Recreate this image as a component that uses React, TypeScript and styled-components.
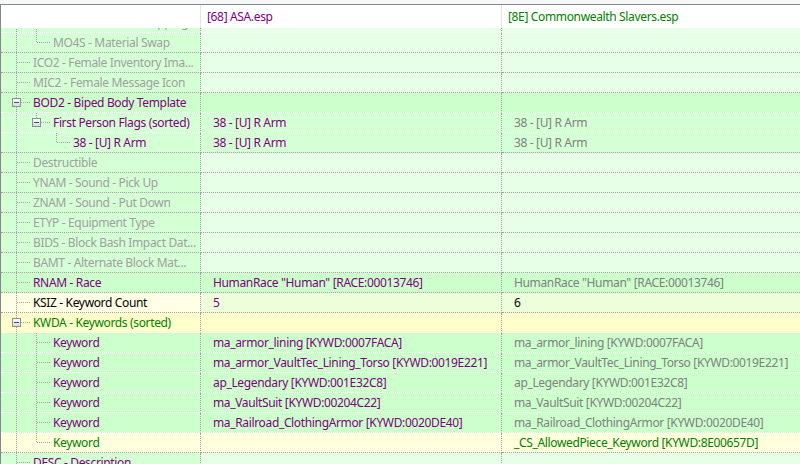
import styled, { createGlobalStyle } from "styled-components";

const GlobalStyle = createGlobalStyle`
  html, body {
    margin: 0;
    padding: 0;
    background: #f7f7f7;
  }
  body {
    font-family: "Noto Sans", "Segoe UI", sans-serif;
    font-size: 12px;
    letter-spacing: -0.35px;
  }
`;

const TREE_W = 200;
const PLUGIN_W = 301;

const Frame = styled.div`
  margin-top: 4px;
  height: 460px;
  box-sizing: border-box;
  border-top: 1px solid #828790;
  border-left: 1px solid #828790;
  background: #fff;
  display: flex;
  flex-direction: column;
  overflow: hidden;
`;

const Header = styled.div`
  display: flex;
  height: 23px;
  flex-shrink: 0;
  background: #fff;
`;

const HeaderCell = styled.div<{ $width?: number; $color?: string; $last?: boolean }>`
  width: ${(p) => (p.$width ? `${p.$width}px` : "auto")};
  flex: ${(p) => (p.$width ? "none" : "1")};
  box-sizing: border-box;
  border-right: ${(p) => (p.$last ? "none" : "1px solid #e5e5e5")};
  padding-left: 6px;
  display: flex;
  align-items: center;
  color: ${(p) => p.$color ?? "#000"};
  white-space: nowrap;
  overflow: hidden;
`;

const Body = styled.div`
  flex: 1;
  overflow: hidden;
`;

// list is scrolled a little, first row only shows its bottom edge
const Rows = styled.div`
  margin-top: -15px;
`;

const Row = styled.div`
  display: flex;
  height: 20px;
`;

const Cell = styled.div<{ $bg: string; $line: string; $width?: number; $last?: boolean }>`
  width: ${(p) => (p.$width ? `${p.$width}px` : "auto")};
  flex: ${(p) => (p.$width ? "none" : "1")};
  height: 20px;
  box-sizing: border-box;
  background: ${(p) => p.$bg};
  border-bottom: 1px dotted ${(p) => p.$line};
  border-right: ${(p) => (p.$last ? "none" : "1px dotted #a0a0a0")};
  display: flex;
  align-items: stretch;
  white-space: nowrap;
  overflow: hidden;
`;

const TreeCell = styled(Cell)`
  padding-left: 6px;
`;

const ValueCell = styled(Cell)`
  padding-left: 12px;
`;

const Label = styled.span<{ $color: string }>`
  margin-left: 6px;
  line-height: 19px;
  color: ${(p) => p.$color};
`;

const Value = styled.span<{ $color: string }>`
  line-height: 19px;
  color: ${(p) => p.$color};
`;

const Slot = styled.svg`
  flex: none;
  display: block;
  overflow: visible;
`;

type Guide = "none" | "pass" | "tee" | "elbow";

const GuideSlot = ({ kind, box }: { kind: Guide; box?: boolean }) => {
  const dash = "1 1";
  const stroke = "#a0a0a0";
  return (
    <Slot width={20} height={19} viewBox="0 0 20 19" shapeRendering="crispEdges">
      {(kind === "pass" || kind === "tee") && (
        <line x1={9.5} y1={0} x2={9.5} y2={19} stroke={stroke} strokeDasharray={dash} />
      )}
      {kind === "elbow" && (
        <line x1={9.5} y1={0} x2={9.5} y2={10} stroke={stroke} strokeDasharray={dash} />
      )}
      {(kind === "tee" || kind === "elbow") && (
        <line x1={box ? 14 : 10} y1={9.5} x2={23} y2={9.5} stroke={stroke} strokeDasharray={dash} />
      )}
      {box && (
        <g>
          <defs>
            <linearGradient id="bx" x1="0" y1="0" x2="0" y2="1">
              <stop offset="0" stopColor="#ffffff" />
              <stop offset="1" stopColor="#d8d8d8" />
            </linearGradient>
          </defs>
          <rect x={5.5} y={5.5} width={8} height={8} fill="url(#bx)" stroke="#8f8f8f" />
          <line x1={7} y1={9.5} x2={12} y2={9.5} stroke="#2f4f9f" />
        </g>
      )}
    </Slot>
  );
};

const GRAY = "#a0a0a0";
const VGRAY = "#808080";
const PURPLE = "#800080";
const GREEN = "#008000";
const BLACK = "#000000";

const D = "#d5ffd5";
const L = "#e6ffe6";
const S = "#ccffcc";
const Y = "#ffffcc";
const YL = "#ffffe6";
const YG = "#ecffda";
const YK = "#ffffdd";

const LINE_GRAY = "#a0a0a0";
const LINE_WHITE = "#ffffff";

interface RowData {
  label: string;
  guides: Guide[];
  box?: boolean;
  color: string;
  bg: [string, string, string];
  line: string;
  v2?: string;
  c2?: string;
  v3?: string;
  c3?: string;
}

const rows: RowData[] = [
  { label: "MO4C - Color Remapping Index", guides: ["pass", "tee"], color: GRAY, bg: [D, L, L], line: LINE_WHITE },
  { label: "MO4S - Material Swap", guides: ["pass", "elbow"], color: GRAY, bg: [D, L, L], line: LINE_GRAY },
  { label: "ICO2 - Female Inventory Ima...", guides: ["tee"], color: GRAY, bg: [D, L, L], line: LINE_GRAY },
  { label: "MIC2 - Female Message Icon", guides: ["tee"], color: GRAY, bg: [D, L, L], line: LINE_GRAY },
  { label: "BOD2 - Biped Body Template", guides: ["tee"], box: true, color: PURPLE, bg: [S, S, S], line: LINE_WHITE },
  {
    label: "First Person Flags (sorted)",
    guides: ["pass", "elbow"],
    box: true,
    color: PURPLE,
    bg: [D, D, D],
    line: LINE_WHITE,
    v2: "38 - [U] R Arm",
    c2: PURPLE,
    v3: "38 - [U] R Arm",
    c3: VGRAY,
  },
  {
    label: "38 - [U] R Arm",
    guides: ["pass", "none", "elbow"],
    color: PURPLE,
    bg: [D, D, D],
    line: LINE_GRAY,
    v2: "38 - [U] R Arm",
    c2: PURPLE,
    v3: "38 - [U] R Arm",
    c3: VGRAY,
  },
  { label: "Destructible", guides: ["tee"], color: GRAY, bg: [D, L, L], line: LINE_GRAY },
  { label: "YNAM - Sound - Pick Up", guides: ["tee"], color: GRAY, bg: [D, L, L], line: LINE_GRAY },
  { label: "ZNAM - Sound - Put Down", guides: ["tee"], color: GRAY, bg: [D, L, L], line: LINE_GRAY },
  { label: "ETYP - Equipment Type", guides: ["tee"], color: GRAY, bg: [D, L, L], line: LINE_GRAY },
  { label: "BIDS - Block Bash Impact Dat...", guides: ["tee"], color: GRAY, bg: [D, L, L], line: LINE_GRAY },
  { label: "BAMT - Alternate Block Mat...", guides: ["tee"], color: GRAY, bg: [D, L, L], line: LINE_GRAY },
  {
    label: "RNAM - Race",
    guides: ["tee"],
    color: PURPLE,
    bg: [S, S, S],
    line: LINE_GRAY,
    v2: 'HumanRace "Human" [RACE:00013746]',
    c2: PURPLE,
    v3: 'HumanRace "Human" [RACE:00013746]',
    c3: VGRAY,
  },
  {
    label: "KSIZ - Keyword Count",
    guides: ["tee"],
    color: BLACK,
    bg: [YL, YG, YG],
    line: LINE_GRAY,
    v2: "5",
    c2: PURPLE,
    v3: "6",
    c3: BLACK,
  },
  { label: "KWDA - Keywords (sorted)", guides: ["tee"], box: true, color: GREEN, bg: [Y, Y, Y], line: LINE_WHITE },
  ...[
    "ma_armor_lining [KYWD:0007FACA]",
    "ma_armor_VaultTec_Lining_Torso [KYWD:0019E221]",
    "ap_Legendary [KYWD:001E32C8]",
    "ma_VaultSuit [KYWD:00204C22]",
    "ma_Railroad_ClothingArmor [KYWD:0020DE40]",
  ].map(
    (kw): RowData => ({
      label: "Keyword",
      guides: ["pass", "tee"],
      color: PURPLE,
      bg: [S, S, S],
      line: LINE_WHITE,
      v2: kw,
      c2: PURPLE,
      v3: kw,
      c3: VGRAY,
    })
  ),
  {
    label: "Keyword",
    guides: ["pass", "elbow"],
    color: GREEN,
    bg: [YK, YK, YK],
    line: LINE_GRAY,
    v3: "_CS_AllowedPiece_Keyword [KYWD:8E00657D]",
    c3: GREEN,
  },
  { label: "DESC - Description", guides: ["tee"], color: PURPLE, bg: [D, L, L], line: LINE_GRAY },
];

const App = () => {
  return (
    <>
      <GlobalStyle />
      <Frame>
        <Header>
          <HeaderCell $width={TREE_W} />
          <HeaderCell $width={PLUGIN_W} $color={PURPLE}>
            [68] ASA.esp
          </HeaderCell>
          <HeaderCell $color={GREEN} $last>
            [8E] Commonwealth Slavers.esp
          </HeaderCell>
        </Header>
        <Body>
          <Rows>
            {rows.map((r, i) => (
              <Row key={i}>
                <TreeCell $width={TREE_W} $bg={r.bg[0]} $line={r.line}>
                  {r.guides.map((g, j) => (
                    <GuideSlot key={j} kind={g} box={r.box && j === r.guides.length - 1} />
                  ))}
                  <Label $color={r.color}>{r.label}</Label>
                </TreeCell>
                <ValueCell $width={PLUGIN_W} $bg={r.bg[1]} $line={r.line}>
                  {r.v2 && <Value $color={r.c2 ?? BLACK}>{r.v2}</Value>}
                </ValueCell>
                <ValueCell $bg={r.bg[2]} $line={r.line} $last>
                  {r.v3 && <Value $color={r.c3 ?? BLACK}>{r.v3}</Value>}
                </ValueCell>
              </Row>
            ))}
          </Rows>
        </Body>
      </Frame>
    </>
  );
};

export default App;
